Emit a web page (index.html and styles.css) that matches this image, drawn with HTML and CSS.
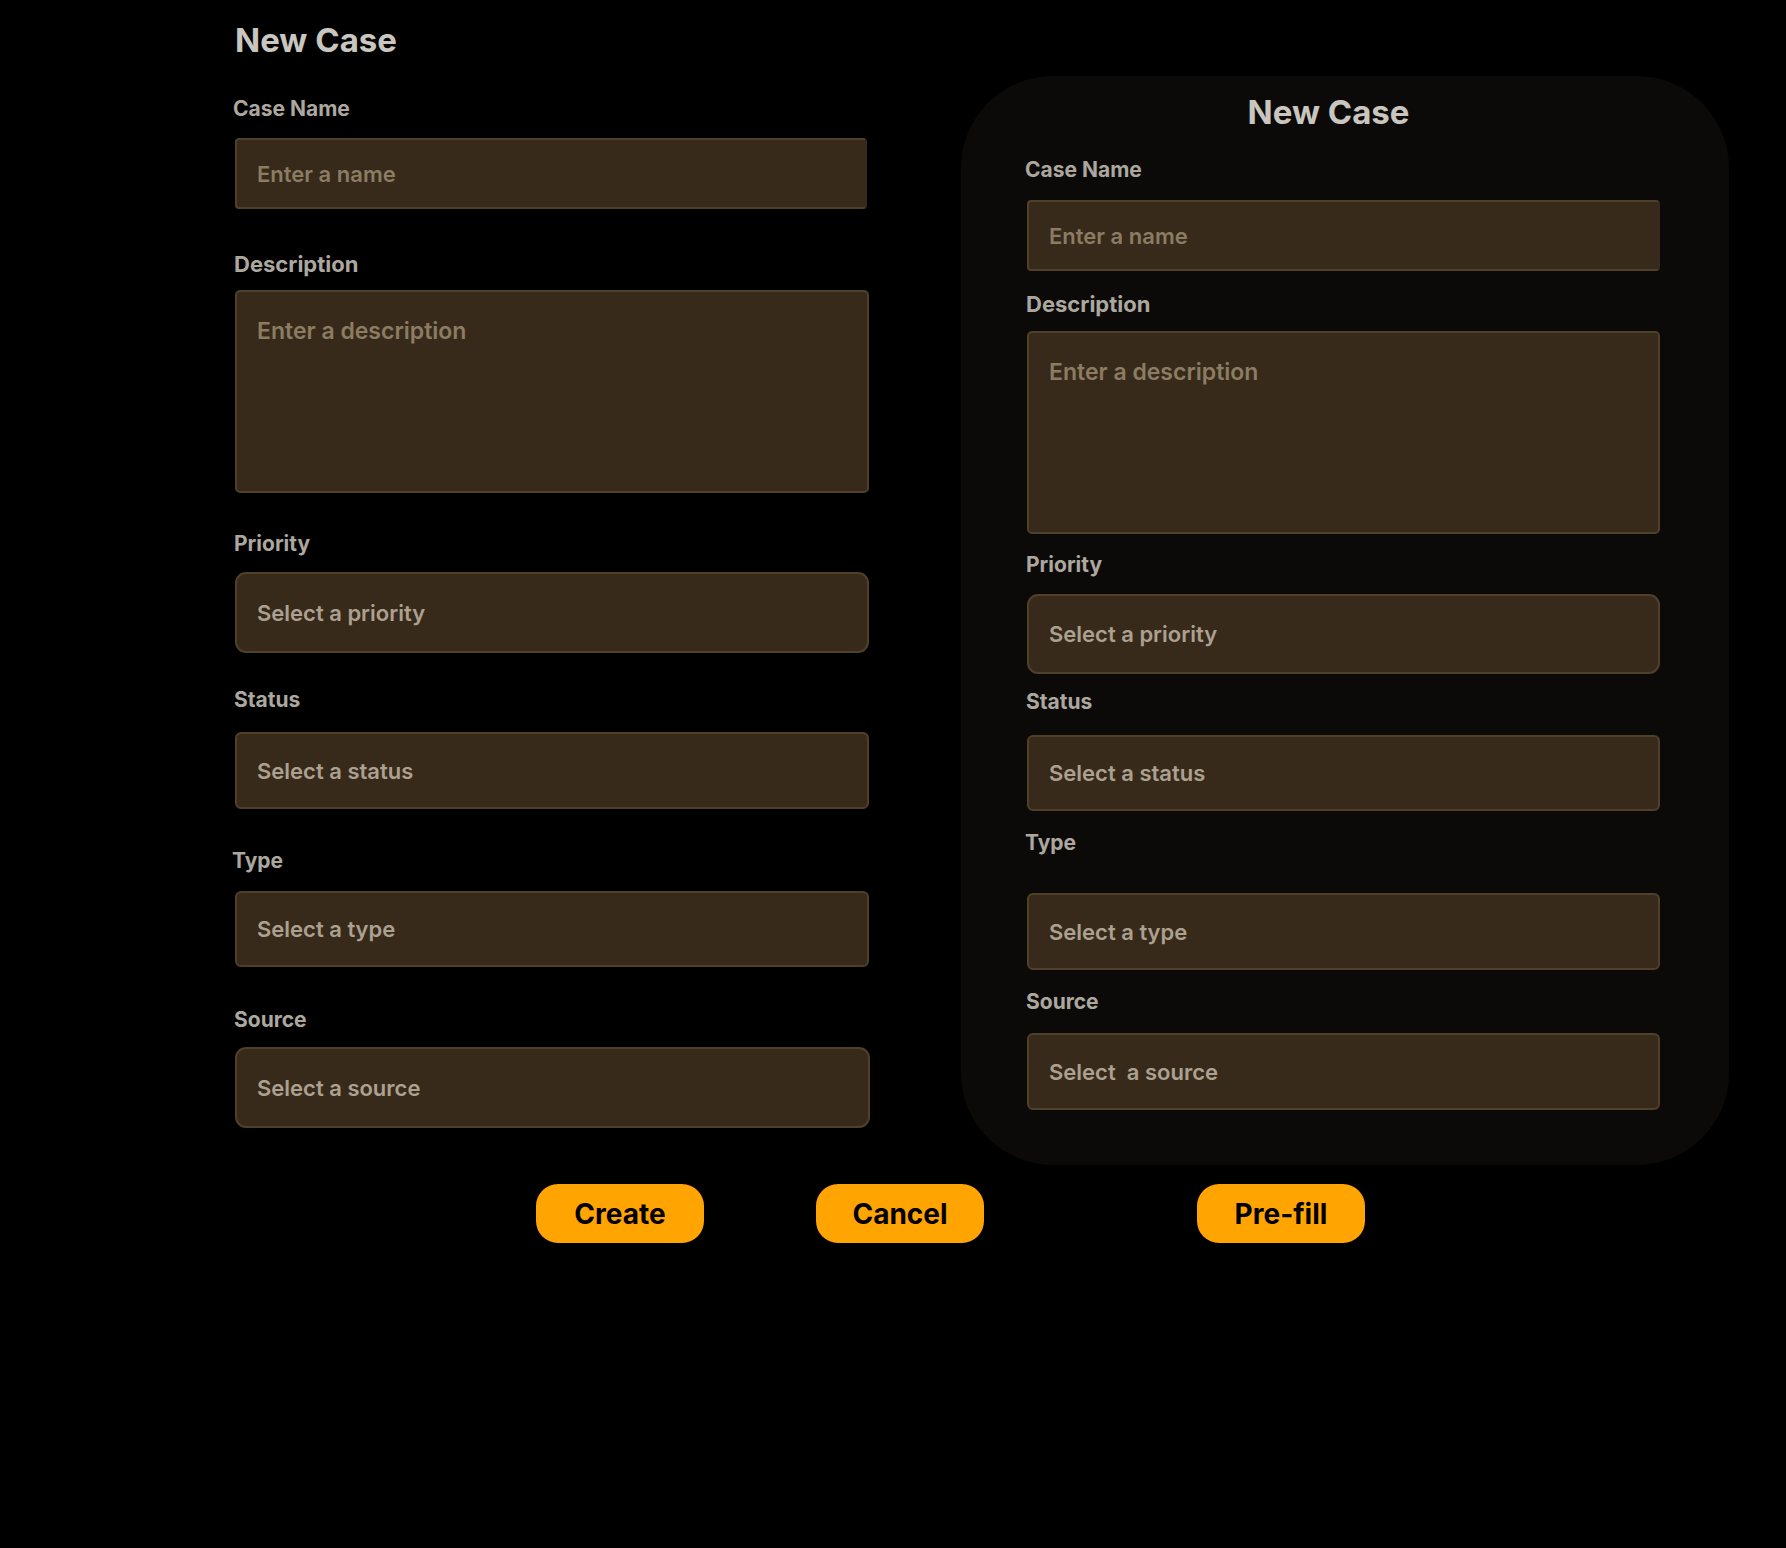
FILE: index.html
```html
<!DOCTYPE html>
<html lang="en">
<head>
<meta charset="utf-8">
<title>New Case</title>
<link rel="stylesheet" href="styles.css">
</head>
<body>
<main class="page">
  <div class="forms">
    <section class="form form-plain">
      <h1 class="title">New Case</h1>
      <div class="field f-name">
        <label class="label">Case Name</label>
        <input class="box box-name" type="text" placeholder="Enter a name">
      </div>
      <div class="field f-desc">
        <label class="label label-lg">Description</label>
        <textarea class="box box-desc" placeholder="Enter a description"></textarea>
      </div>
      <div class="field f-priority">
        <label class="label">Priority</label>
        <div class="box select r-lg h81">Select a priority</div>
      </div>
      <div class="field f-status">
        <label class="label">Status</label>
        <div class="box select r-sm h77">Select a status</div>
      </div>
      <div class="field f-type">
        <label class="label">Type</label>
        <div class="box select r-sm h76">Select a type</div>
      </div>
      <div class="field f-source">
        <label class="label">Source</label>
        <div class="box select r-lg h81">Select a source</div>
      </div>
    </section>

    <section class="form form-card">
      <h1 class="title title-center">New Case</h1>
      <div class="field c-name">
        <label class="label">Case Name</label>
        <input class="box box-name" type="text" placeholder="Enter a name">
      </div>
      <div class="field c-desc">
        <label class="label label-lg">Description</label>
        <textarea class="box box-desc" placeholder="Enter a description"></textarea>
      </div>
      <div class="field c-priority">
        <label class="label">Priority</label>
        <div class="box select r-lg h80">Select a priority</div>
      </div>
      <div class="field c-status">
        <label class="label">Status</label>
        <div class="box select r-sm h76">Select a status</div>
      </div>
      <div class="field c-type">
        <label class="label">Type</label>
        <div class="box select r-sm h77">Select a type</div>
      </div>
      <div class="field c-source">
        <label class="label">Source</label>
        <div class="box select r-sm h77">Select &nbsp;a source</div>
      </div>
    </section>
  </div>

  <div class="actions">
    <button class="btn">Create</button>
    <button class="btn btn-cancel">Cancel</button>
    <button class="btn btn-prefill">Pre-fill</button>
  </div>
</main>
</body>
</html>
```

FILE: styles.css
```css
* { box-sizing: border-box; }

html, body {
  margin: 0;
  background: #000;
}

body {
  font-family: Inter, "Noto Sans", "Liberation Sans", sans-serif;
  color: #aaa59c;
  min-height: 1548px;
}

.page {
  padding-left: 235px;
}

.forms {
  display: flex;
  align-items: flex-start;
  gap: 92px;
}

.form {
  display: flex;
  flex-direction: column;
}

.form-plain {
  width: 634px;
  padding-top: 20px;
}

.form-card {
  width: 768px;
  margin-top: 76px;
  height: 1089px;
  background: #0c0a09;
  border-radius: 92px;
  padding: 16px 69px 0 66px;
}

.title {
  margin: 0;
  font-size: 33px;
  line-height: 40px;
  font-weight: 700;
  color: #c9c6bf;
  letter-spacing: 0;
}

.title-center {
  text-align: center;
  padding-right: 30px;
}

.field {
  display: flex;
  flex-direction: column;
}

.label {
  font-size: 21px;
  line-height: 24px;
  font-weight: 700;
  color: #aca89f;
  margin-left: -1px;
}

.label-lg {
  font-size: 22px;
  line-height: 26px;
}

.box {
  display: flex;
  align-items: center;
  width: 100%;
  background: #372a1a;
  border: 2px solid #4f4029;
  border-radius: 5px;
  padding: 0 20px;
  font-family: inherit;
  font-size: 22px;
  font-weight: 600;
  color: #a99e8d;
  outline: none;
}

.box::placeholder {
  color: #8b7c62;
  opacity: 1;
}

.box-name {
  height: 71px;
  border-radius: 4px;
  color: #8b7c62;
  border-right-color: #372a1a;
}

.box-desc {
  height: 203px;
  resize: none;
  padding-top: 26px;
  line-height: 26px;
  font-size: 23px;
  display: block;
}

.select { color: #aca190; }

.r-lg { border-radius: 11px; }
.r-sm { border-radius: 6px; }
.h76 { height: 76px; }
.h77 { height: 77px; }
.h80 { height: 80px; }
.h81 { height: 81px; }

/* left form spacing */
.f-name { margin-top: 37px; }
.f-name .label { margin-bottom: 17px; margin-left: -2px; }
.f-name .box { width: 632px; }
.f-desc { margin-top: 42px; }
.f-desc .label { margin-bottom: 13px; }
.f-priority { margin-top: 39px; }
.f-priority .label { margin-bottom: 16px; }
.f-status { margin-top: 35px; }
.f-status .label { margin-bottom: 20px; }
.f-type { margin-top: 40px; }
.f-type .label { margin-bottom: 18px; margin-left: -3px; }
.f-source { margin-top: 41px; }
.f-source .label { margin-bottom: 15px; }
.f-source .box { width: 635px; }

/* card spacing */
.c-name { margin-top: 26px; }
.c-name .label { margin-bottom: 18px; margin-left: -2px; }
.c-desc { margin-top: 20px; }
.c-desc .label { margin-bottom: 14px; }
.c-priority { margin-top: 19px; }
.c-priority .label { margin-bottom: 17px; }
.c-status { margin-top: 16px; }
.c-status .label { margin-bottom: 21px; }
.c-type { margin-top: 20px; }
.c-type .label { margin-bottom: 38px; margin-left: -2px; }
.c-source { margin-top: 20px; }
.c-source .label { margin-bottom: 19px; }

.actions {
  display: flex;
  padding-left: 301px;
  margin-top: 19px;
}

.btn {
  width: 168px;
  height: 59px;
  border: none;
  border-radius: 22px;
  background: #ffa400;
  color: #000;
  font-family: inherit;
  font-size: 28px;
  font-weight: 700;
  letter-spacing: 0;
  padding: 0;
}

.btn-cancel { margin-left: 112px; }
.btn-prefill { margin-left: 213px; }
```
